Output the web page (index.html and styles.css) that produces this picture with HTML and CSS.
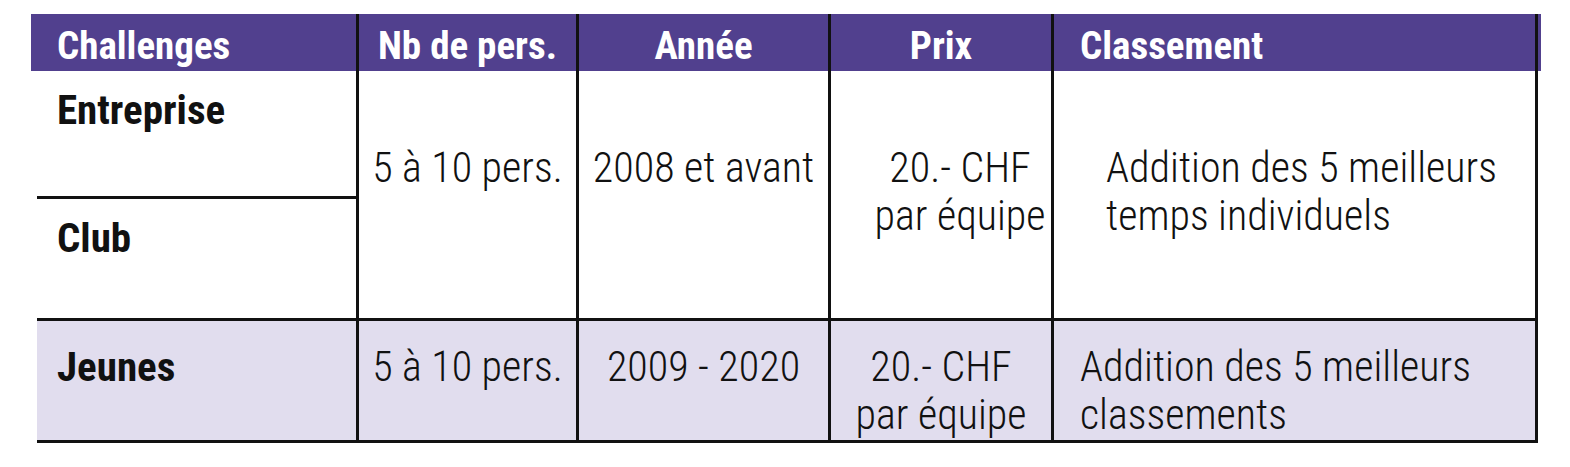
FILE: index.html
```html
<!DOCTYPE html>
<html lang="fr">
<head>
<meta charset="utf-8">
<title>Challenges</title>
<link rel="stylesheet" href="styles.css">
</head>
<body>
<div class="sheet">
  <div class="grid">
    <div class="th th-first">Challenges</div>
    <div class="th th-center">Nb de pers.</div>
    <div class="th th-center">Année</div>
    <div class="th th-center">Prix</div>
    <div class="th th-last">Classement</div>

    <div class="td name name-a">Entreprise</div>
    <div class="td span2 center sep">5 à 10 pers.</div>
    <div class="td span2 center sep">2008 et avant</div>
    <div class="td span2 center sep price-a">20.- CHF<br>par équipe</div>
    <div class="td span2 rank-a">Addition des 5 meilleurs<br>temps individuels</div>
    <div class="td name name-b">Club</div>

    <div class="td young name name-c">Jeunes</div>
    <div class="td young center sep">5 à 10 pers.</div>
    <div class="td young center sep">2009 - 2020</div>
    <div class="td young center sep">20.- CHF<br>par équipe</div>
    <div class="td young rank-c">Addition des 5 meilleurs<br>classements</div>
  </div>
</div>
</body>
</html>
```
FILE: styles.css
```css
html, body {
  margin: 0;
  background: #ffffff;
}
.sheet {
  padding: 14px 0 0 31px;
}
.grid {
  display: grid;
  grid-template-columns: 328px 220px 252px 223px 484px;
  grid-template-rows: 57px 128px 119px 125px;
  width: 1507px;
  font-family: "Roboto Condensed", "Roboto", sans-serif;
  color: #111111;
}
.th {
  background: #51408e;
  color: #ffffff;
  font-weight: 700;
  font-size: 39px;
  line-height: 49px;
  padding-top: 8px;
  border-right: 3px solid #111111;
  white-space: nowrap;
}
.th-first {
  padding-left: 26px;
}
.th-center {
  text-align: center;
}
.th-last {
  padding-left: 26px;
  box-shadow: 3px 0 0 #51408e;
}
.td {
  font-size: 42px;
  font-weight: 300;
  line-height: 48px;
  white-space: nowrap;
  border-right: 3px solid #111111;
}
.span2 {
  grid-row: span 2;
  padding-top: 73px;
}
.center {
  text-align: center;
}
.name {
  font-weight: 700;
  font-size: 41px;
  margin-left: 6px;
  padding-left: 20px;
}
.name-a {
  padding-top: 15px;
  border-bottom: 3px solid #111111;
  grid-column: 1;
  grid-row: 2;
}
.name-b {
  padding-top: 15px;
  grid-column: 1;
  grid-row: 3;
}
.price-a {
  padding-left: 38px;
}
.rank-a {
  padding-left: 52px;
}
.young {
  background: #e1ddee;
  border-top: 3px solid #111111;
  border-bottom: 3px solid #111111;
  padding-top: 22px;
}
.rank-c {
  padding-left: 26px;
}
```
